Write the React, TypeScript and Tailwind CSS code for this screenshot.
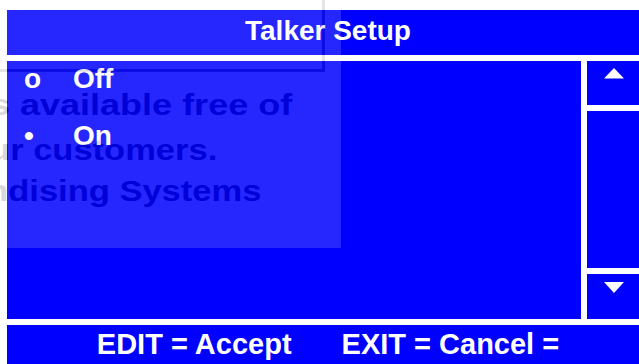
import React from 'react'

const OPTIONS = [
  { mark: 'o', label: 'Off' },
  { mark: '•', label: 'On' },
]

function Arrow({ dir }: { dir: 'up' | 'down' }) {
  return (
    <svg width="20" height="11" viewBox="0 0 20 11" className="block">
      {dir === 'up' ? (
        <polygon points="0,10.5 10,0 20,10.5" fill="#ffffff" />
      ) : (
        <polygon points="0,0 20,0 10,11" fill="#ffffff" />
      )}
    </svg>
  )
}

// faint image of the window that sat behind the panel when the screen was photographed
function Ghost() {
  return (
    <div className="pointer-events-none absolute left-0 top-0 h-[248px] w-[341px] overflow-hidden bg-white opacity-[0.15]">
      <div className="absolute left-[-20px] top-[-20px] h-[92px] w-[345px] border-[3px] border-[#555555]" />
      <div className="absolute left-0 top-0 h-full w-full font-bold text-[30px] leading-[34px] text-black">
        <div className="absolute left-[-20px] top-[88px] origin-left scale-x-120 whitespace-nowrap">is available free of</div>
        <div className="absolute left-[-32px] top-[133px] origin-left scale-x-115 whitespace-nowrap">our customers.</div>
        <div className="absolute left-[-32px] top-[174px] origin-left scale-x-115 whitespace-nowrap">andising Systems</div>
      </div>
    </div>
  )
}

export default function App() {
  return (
    <div
      className="relative h-[364px] w-[639px] overflow-hidden bg-white"
      style={{ fontFamily: '"Liberation Sans", Arial, sans-serif' }}
    >
      <div className="flex flex-col gap-[6px] pl-[7px] pt-[10px]">
        <div className="flex h-[45px] justify-center bg-[#0000ff] pl-[10px] pt-[5px]">
          <span className="text-[28px] font-bold leading-[32px] text-white">Talker Setup</span>
        </div>

        <div className="flex h-[258px] gap-[6px]">
          <div className="flex flex-1 flex-col bg-[#0000ff] pl-[17px] pt-[2px]">
            {OPTIONS.map((o) => (
              <div key={o.label} className="mb-[25px] flex text-[28px] font-bold leading-[32px] text-white">
                <span className="w-[49px]">{o.mark}</span>
                <span>{o.label}</span>
              </div>
            ))}
          </div>

          <div className="flex w-[52px] flex-col gap-[6px]">
            <div className="flex h-[44px] justify-center bg-[#0000ff] pl-[2px] pt-[7px]">
              <Arrow dir="up" />
            </div>
            <div className="flex-1 bg-[#0000ff]" />
            <div className="flex h-[45px] justify-center bg-[#0000ff] pl-[2px] pt-[8px]">
              <Arrow dir="down" />
            </div>
          </div>
        </div>

        <div className="flex h-[45px] justify-center gap-[50px] bg-[#0000ff] pl-[10px] pt-[3px] text-[29px] font-bold leading-[32px] text-white">
          <span>EDIT = Accept</span>
          <span>EXIT = Cancel =</span>
        </div>
      </div>

      <Ghost />
    </div>
  )
}
